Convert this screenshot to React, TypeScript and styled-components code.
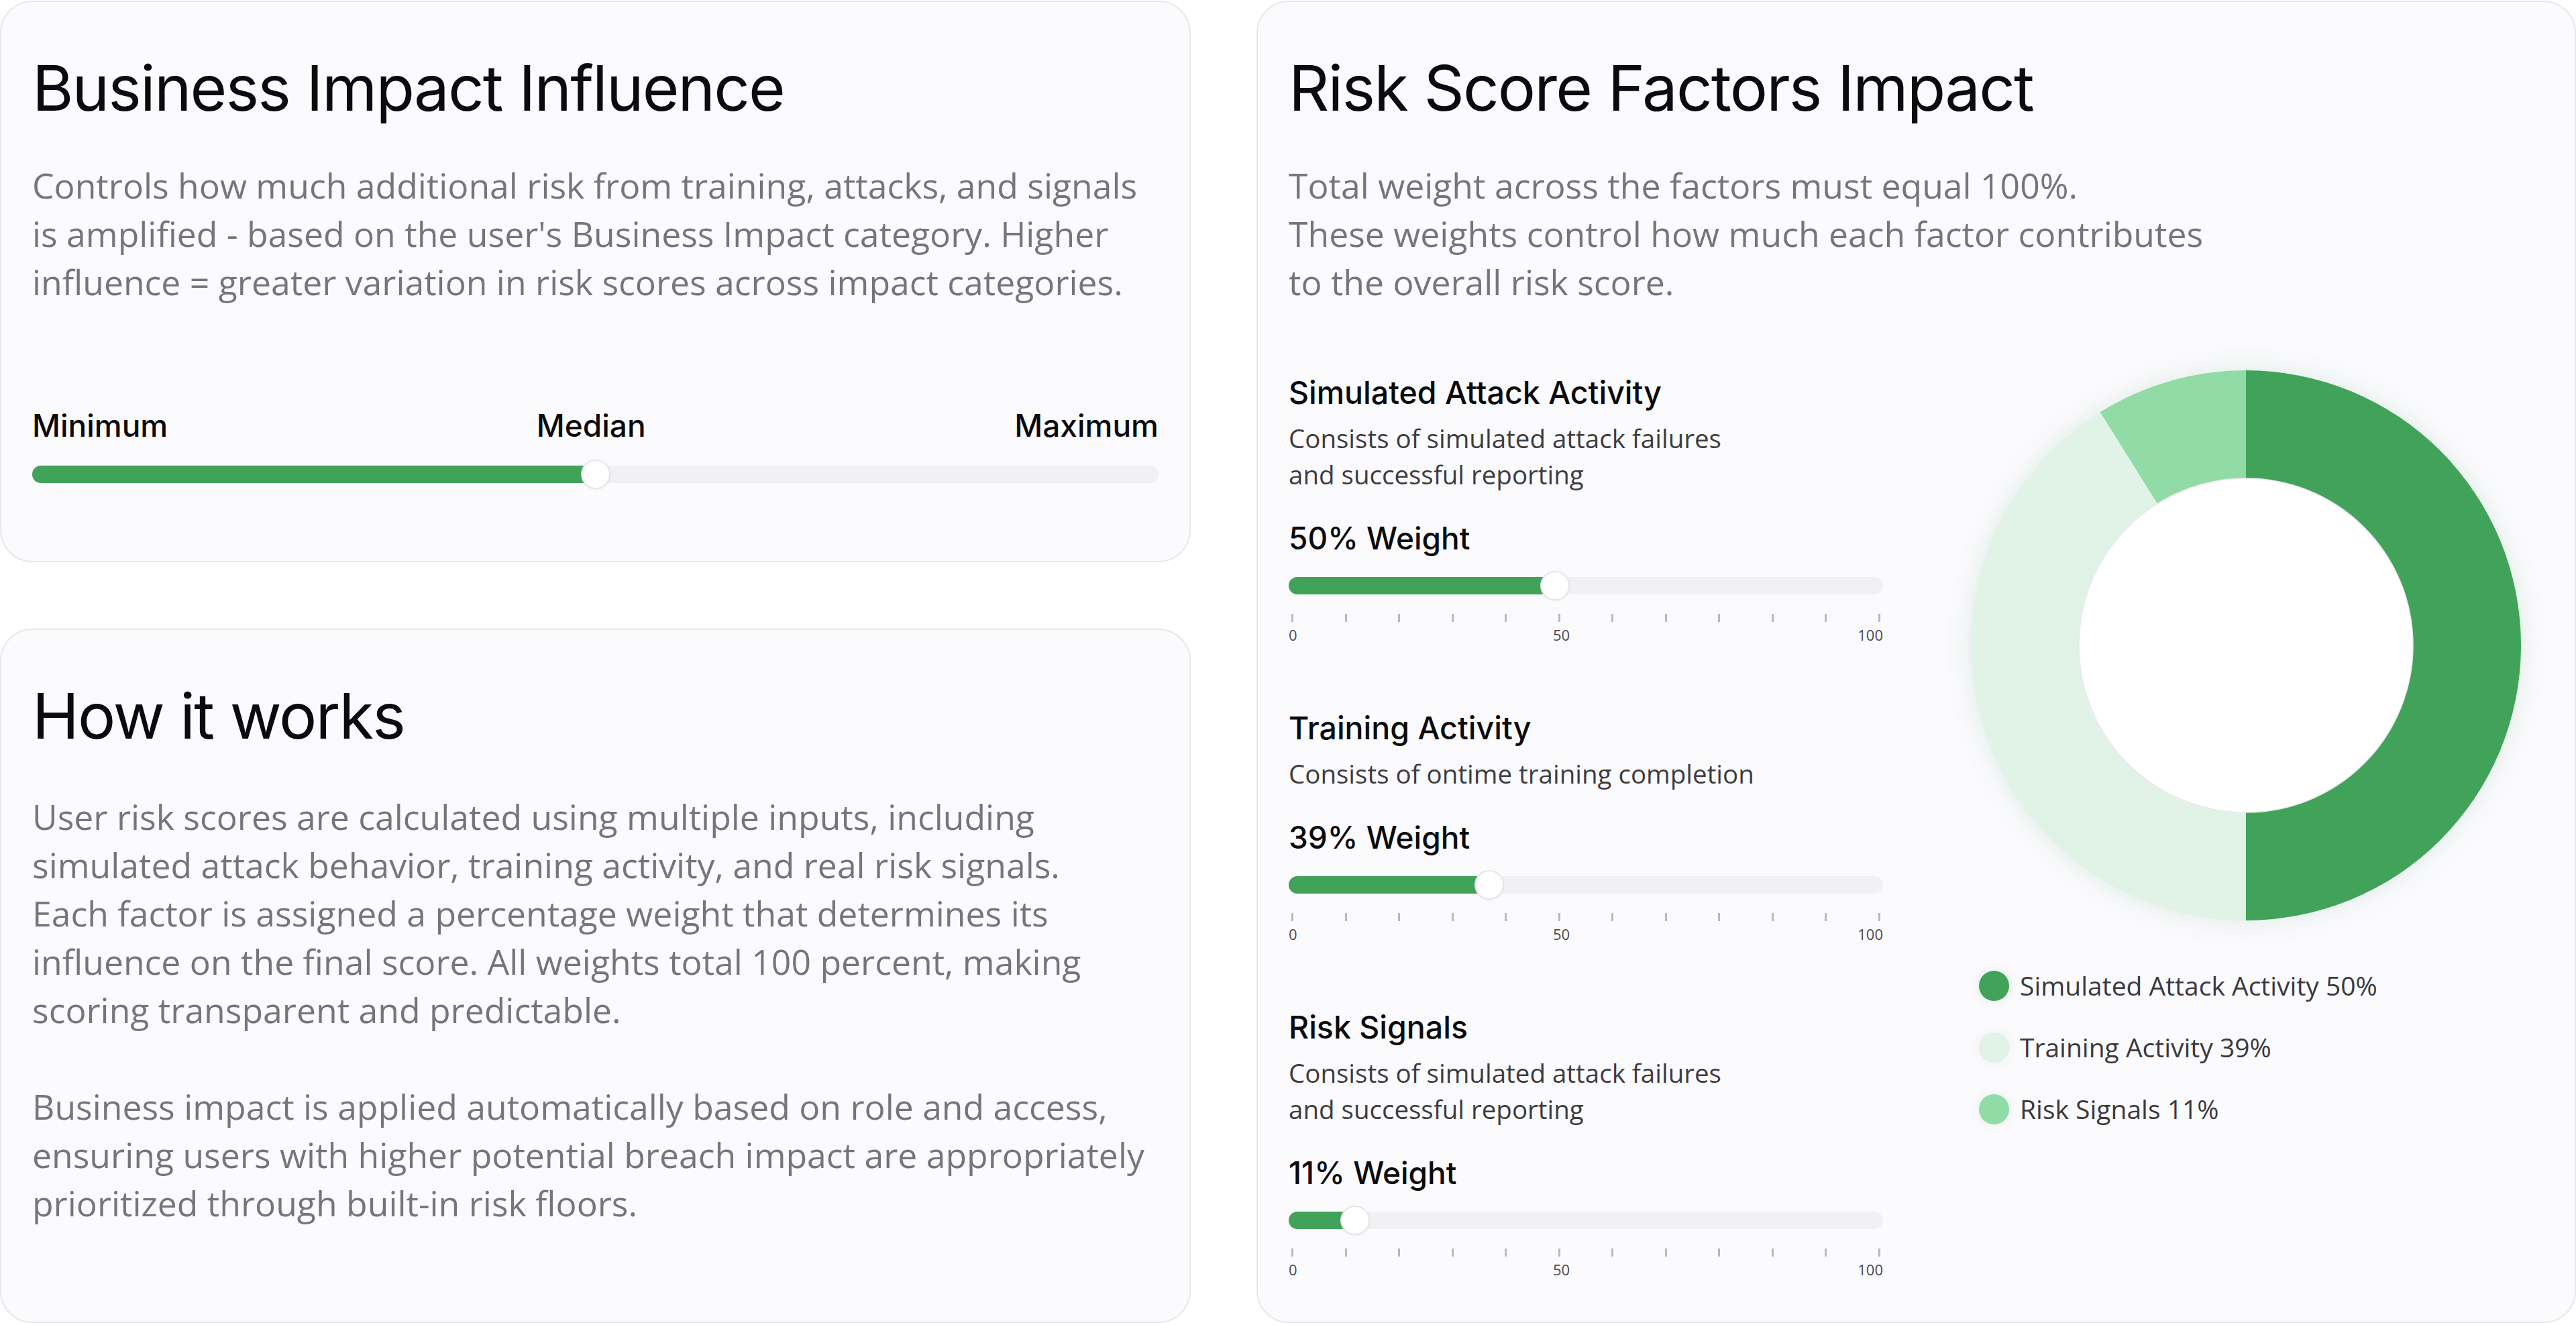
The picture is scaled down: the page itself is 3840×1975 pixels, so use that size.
import styled, { createGlobalStyle } from "styled-components";

// Data for the factor sliders and the chart
const factors = [
  {
    name: "Simulated Attack Activity",
    desc: ["Consists of simulated attack failures", "and successful reporting"],
    weight: 50,
    position: 44.8,
  },
  {
    name: "Training Activity",
    desc: ["Consists of ontime training completion"],
    weight: 39,
    position: 33.7,
  },
  {
    name: "Risk Signals",
    desc: ["Consists of simulated attack failures", "and successful reporting"],
    weight: 11,
    position: 11.2,
  },
];

const COLORS = {
  dark: "#41a35a",
  light: "#e1f2e6",
  mid: "#90dba6",
};

const legend = [
  { label: "Simulated Attack Activity 50%", color: COLORS.dark, glow: "rgba(65,163,90,0.18)" },
  { label: "Training Activity 39%", color: COLORS.light, glow: "rgba(160,200,170,0.18)" },
  { label: "Risk Signals 11%", color: COLORS.mid, glow: "rgba(120,200,145,0.2)" },
];

// chart sweeps, degrees clockwise from 12 o'clock
const segments = [
  { from: 180, to: 328, color: COLORS.light },
  { from: 328, to: 360, color: COLORS.mid },
  { from: 0, to: 180, color: COLORS.dark },
];

const SIZE = 820;
const C = SIZE / 2;
const R_OUT = 410;
const R_IN = 249;

const polar = (r: number, deg: number) => {
  const a = ((deg - 90) * Math.PI) / 180;
  return [C + r * Math.cos(a), C + r * Math.sin(a)];
};

const arcPath = (from: number, to: number) => {
  const [x1, y1] = polar(R_OUT, from);
  const [x2, y2] = polar(R_OUT, to - 0.001);
  const [x3, y3] = polar(R_IN, to - 0.001);
  const [x4, y4] = polar(R_IN, from);
  const large = to - from > 180 ? 1 : 0;
  return `M${x1} ${y1} A${R_OUT} ${R_OUT} 0 ${large} 1 ${x2} ${y2} L${x3} ${y3} A${R_IN} ${R_IN} 0 ${large} 0 ${x4} ${y4} Z`;
};

const TICKS = Array.from({ length: 12 });

function Slider({ position }: { position: number }) {
  return (
    <Track>
      <Fill style={{ width: `${position}%` }} />
      <Thumb style={{ left: `${position}%` }} />
    </Track>
  );
}

export default function App() {
  return (
    <>
      <GlobalStyle />
      <Page>
        <LeftColumn>
          {/* Business impact card */}
          <Card $bottom={116}>
            <Title>Business Impact Influence</Title>
            <Body>
              Controls how much additional risk from training, attacks, and signals
              <br />
              is amplified - based on the user's Business Impact category. Higher
              <br />
              influence = greater variation in risk scores across impact categories.
            </Body>
            <ScaleLabels>
              <span>Minimum</span>
              <span>Median</span>
              <span>Maximum</span>
            </ScaleLabels>
            <WideTrack>
              <Slider position={50} />
            </WideTrack>
          </Card>

          {/* How it works card */}
          <Card $grow>
            <Title>How it works</Title>
            <Body $gap={57}>
              User risk scores are calculated using multiple inputs, including
              <br />
              simulated attack behavior, training activity, and real risk signals.
              <br />
              Each factor is assigned a percentage weight that determines its
              <br />
              influence on the final score. All weights total 100 percent, making
              <br />
              scoring transparent and predictable.
            </Body>
            <Body $gap={72}>
              Business impact is applied automatically based on role and access,
              <br />
              ensuring users with higher potential breach impact are appropriately
              <br />
              prioritized through built-in risk floors.
            </Body>
          </Card>
        </LeftColumn>

        {/* Risk score factors card */}
        <Card>
          <Title>Risk Score Factors Impact</Title>
          <Body>
            Total weight across the factors must equal 100%.
            <br />
            These weights control how much each factor contributes
            <br />
            to the overall risk score.
          </Body>
          <FactorsRow>
            <FactorList>
              {factors.map((f) => (
                <Factor key={f.name}>
                  <FactorName>{f.name}</FactorName>
                  <FactorDesc>
                    {f.desc.map((line, i) => (
                      <span key={i}>
                        {line}
                        {i < f.desc.length - 1 && <br />}
                      </span>
                    ))}
                  </FactorDesc>
                  <WeightLabel>{f.weight}% Weight</WeightLabel>
                  <SliderWrap>
                    <Slider position={f.position} />
                  </SliderWrap>
                  <Ticks>
                    {TICKS.map((_, i) => (
                      <Tick key={i} />
                    ))}
                  </Ticks>
                  <TickLabels>
                    <span>0</span>
                    <MidTick>
                      <span>50</span>
                      <span>100</span>
                    </MidTick>
                  </TickLabels>
                </Factor>
              ))}
            </FactorList>

            <ChartColumn>
              <Donut width={SIZE} height={SIZE} viewBox={`0 0 ${SIZE} ${SIZE}`}>
                {segments.map((s) => (
                  <path key={s.from} d={arcPath(s.from, s.to)} fill={s.color} />
                ))}
                <circle cx={C} cy={C} r={R_IN} fill="#ffffff" stroke="#ebe9ee" strokeWidth={1.5} />
              </Donut>
              <Legend>
                {legend.map((l) => (
                  <LegendItem key={l.label}>
                    <Dot $color={l.color} $glow={l.glow} />
                    <span>{l.label}</span>
                  </LegendItem>
                ))}
              </Legend>
            </ChartColumn>
          </FactorsRow>
        </Card>
      </Page>
    </>
  );
}

const GlobalStyle = createGlobalStyle`
  html, body {
    margin: 0;
    padding: 0;
    background: #ffffff;
  }
  * { box-sizing: border-box; }
`;

const Page = styled.div`
  width: 3840px;
  height: 1975px;
  padding: 1px 0 3px;
  display: grid;
  grid-template-columns: 1775px 1fr;
  column-gap: 98px;
`;

const LeftColumn = styled.div`
  display: flex;
  flex-direction: column;
  gap: 99px;
`;

const Card = styled.section<{ $bottom?: number; $grow?: boolean }>`
  background: #fbfafd;
  border: 2px solid #e8e7ec;
  border-radius: 48px;
  padding: 72px 46px ${({ $bottom }) => $bottom ?? 0}px;
  flex: ${({ $grow }) => ($grow ? 1 : "none")};
`;

const Title = styled.h2`
  margin: 0;
  font-family: Inter, "Liberation Sans", sans-serif;
  font-weight: 400;
  font-size: 94px;
  line-height: 113px;
  letter-spacing: -0.02em;
  color: #0b0b0d;
`;

const Body = styled.p<{ $gap?: number }>`
  margin: ${({ $gap }) => $gap ?? 52}px 0 0;
  font-family: "Open Sans", sans-serif;
  font-size: 51.7px;
  line-height: 72px;
  color: #76757a;
  white-space: nowrap;
`;

const ScaleLabels = styled.div`
  margin-top: 148px;
  display: flex;
  justify-content: space-between;
  font-family: Inter, "Liberation Sans", sans-serif;
  font-weight: 500;
  font-size: 46px;
  line-height: 60px;
  color: #0b0b0d;
`;

const WideTrack = styled.div`
  margin-top: 30px;
`;

const Track = styled.div`
  position: relative;
  height: 26px;
  border-radius: 13px;
  background: #f1f0f3;
`;

const Fill = styled.div`
  height: 100%;
  border-radius: 13px;
  background: ${COLORS.dark};
`;

const Thumb = styled.div`
  position: absolute;
  top: 50%;
  width: 44px;
  height: 44px;
  border-radius: 50%;
  background: #ffffff;
  border: 2px solid #e6e5e9;
  box-shadow: 0 1px 3px rgba(0, 0, 0, 0.06);
  transform: translate(-50%, -50%);
`;

const FactorsRow = styled.div`
  margin-top: 96px;
  display: flex;
  align-items: flex-start;
`;

const FactorList = styled.div`
  width: 886px;
  padding-top: 3px;
  display: flex;
  flex-direction: column;
  gap: 96px;
`;

const Factor = styled.div`
  display: flex;
  flex-direction: column;
`;

const FactorName = styled.h3`
  margin: 0;
  font-family: Inter, "Liberation Sans", sans-serif;
  font-weight: 500;
  font-size: 46.5px;
  line-height: 60px;
  color: #0b0b0d;
`;

const FactorDesc = styled.p`
  margin: 11px 0 0;
  font-family: "Open Sans", sans-serif;
  font-size: 38.5px;
  line-height: 54px;
  color: #3d3c41;
  white-space: nowrap;
`;

const WeightLabel = styled.div`
  margin-top: 38px;
  font-family: Inter, "Liberation Sans", sans-serif;
  font-weight: 500;
  font-size: 46px;
  line-height: 60px;
  color: #0b0b0d;
`;

const SliderWrap = styled.div`
  margin-top: 28px;
`;

const Ticks = styled.div`
  margin-top: 29px;
  padding: 0 4px;
  display: flex;
  justify-content: space-between;
`;

const Tick = styled.span`
  width: 3px;
  height: 12px;
  background: #b9b9bd;
`;

const TickLabels = styled.div`
  margin-top: 6px;
  display: grid;
  grid-template-columns: 5fr 6fr;
  font-family: "Open Sans", sans-serif;
  font-size: 22px;
  line-height: 26px;
  color: #4a494e;
`;

const MidTick = styled.div`
  display: flex;
  justify-content: space-between;

  & > span:first-child {
    transform: translateX(-35%);
  }
`;

const ChartColumn = styled.div`
  margin-left: auto;
  width: 854px;
  display: flex;
  flex-direction: column;
`;

const Donut = styled.svg`
  display: block;
  filter: drop-shadow(0 0 18px rgba(65, 163, 90, 0.16));
`;

const Legend = styled.div`
  margin-top: 70px;
  padding-left: 12px;
  display: flex;
  flex-direction: column;
  gap: 38px;
`;

const LegendItem = styled.div`
  display: flex;
  align-items: center;
  gap: 16px;
  font-family: "Open Sans", sans-serif;
  font-size: 39px;
  line-height: 54px;
  color: #3a393e;
`;

const Dot = styled.span<{ $color: string; $glow: string }>`
  width: 45px;
  height: 45px;
  border-radius: 50%;
  background: ${({ $color }) => $color};
  box-shadow: 0 0 14px ${({ $glow }) => $glow};
  flex: none;
`;
